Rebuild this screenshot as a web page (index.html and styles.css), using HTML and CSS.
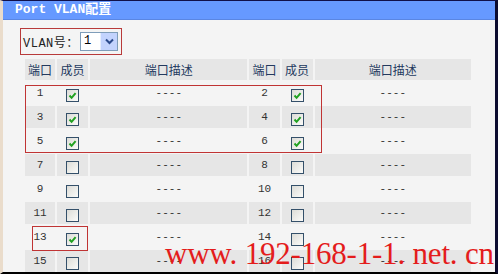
FILE: index.html
```html
<!DOCTYPE html>
<html lang="zh-CN">

<head>
  <meta charset="UTF-8">
  <title>Port VLAN配置</title>
  <link rel="stylesheet" href="styles.css">
</head>

<body>
  <div class="panel">
    <div class="title">Port VLAN配置</div>

    <div class="content">
      <div class="vlan-pick">
        <span class="vlan-label">VLAN号：</span>
        <span class="select">
          <span class="select-val">1</span>
          <span class="select-btn">
            <svg width="9" height="7" viewBox="0 0 9 7"><path d="M1 1.5 L4.5 5 L8 1.5" fill="none" stroke="#2b4a8c" stroke-width="2"/></svg>
          </span>
        </span>
      </div>

      <table class="ports">
        <colgroup>
          <col class="c-port"><col class="c-member"><col class="c-desc-l">
          <col class="c-port"><col class="c-member"><col class="c-desc-r">
        </colgroup>
        <tr class="head">
          <td>端口</td><td>成员</td><td>端口描述</td>
          <td>端口</td><td>成员</td><td>端口描述</td>
        </tr>
        <tr>
          <td>1</td><td><span class="box on"></span></td><td>----</td>
          <td>2</td><td><span class="box on"></span></td><td>----</td>
        </tr>
        <tr class="alt">
          <td>3</td><td><span class="box on"></span></td><td>----</td>
          <td>4</td><td><span class="box on"></span></td><td>----</td>
        </tr>
        <tr>
          <td>5</td><td><span class="box on"></span></td><td>----</td>
          <td>6</td><td><span class="box on"></span></td><td>----</td>
        </tr>
        <tr class="alt">
          <td>7</td><td><span class="box"></span></td><td>----</td>
          <td>8</td><td><span class="box"></span></td><td>----</td>
        </tr>
        <tr>
          <td>9</td><td><span class="box"></span></td><td>----</td>
          <td>10</td><td><span class="box"></span></td><td>----</td>
        </tr>
        <tr class="alt">
          <td>11</td><td><span class="box"></span></td><td>----</td>
          <td>12</td><td><span class="box"></span></td><td>----</td>
        </tr>
        <tr>
          <td>13</td><td><span class="box on"></span></td><td>----</td>
          <td>14</td><td><span class="box"></span></td><td>----</td>
        </tr>
        <tr class="alt">
          <td>15</td><td><span class="box"></span></td><td>----</td>
          <td>16</td><td><span class="box"></span></td><td>----</td>
        </tr>
      </table>
    </div>

    <!-- red annotation frames -->
    <div class="mark mark-rows"></div>
    <div class="mark mark-13"></div>

    <div class="watermark">www. 192-168-1-1. net. cn</div>
  </div>
</body>

</html>
```

FILE: styles.css
```css
html,
body {
  margin: 0;
  padding: 0;
  overflow: hidden;
}

body {
  font-family: "Liberation Mono", "Noto Sans CJK SC", monospace;
  background: #f4f4f4;
}

.panel {
  position: relative;
  width: 498px;
  height: 274px;
  box-sizing: border-box;
  border-top: 1px solid #10104a;
  border-right: 3px solid #0c0c30;
  border-bottom: 2px solid #000;
  border-left: 3px solid #eadccb;
  background: #f4f4f4;
  overflow: hidden;
}

.title {
  height: 18px;
  line-height: 18px;
  padding-left: 12px;
  background: #6699ff;
  border-bottom: 1px solid #5a86e2;
  color: #fff;
  font-size: 13px;
  font-weight: bold;
}

.vlan-pick {
  display: flex;
  align-items: center;
  width: 102px;
  height: 27px;
  box-sizing: border-box;
  margin: 8px 0 0 17px;
  padding-left: 2px;
  border: 1px solid #b83a3a;
}

.vlan-label {
  flex-shrink: 0;
  white-space: nowrap;
  font-size: 12px;
  letter-spacing: 0.5px;
  color: #222;
  width: 57px;
}

.select {
  display: flex;
  flex-shrink: 0;
  width: 38px;
  height: 19px;
  box-sizing: border-box;
  border: 1px solid #7f9db9;
  background: #fff;
}

.select-val {
  flex: 1;
  font-size: 12px;
  line-height: 17px;
  padding-left: 3px;
  color: #000;
}

.select-btn {
  display: flex;
  align-items: center;
  justify-content: center;
  width: 16px;
  background: #c3d3fd;
  border-left: 1px solid #e6eeff;
}

.ports {
  margin: 2px 0 0 20px;
  border-spacing: 2px;
  table-layout: fixed;
  width: 450px;
}

.c-port { width: 30px; }
.c-member { width: 31px; }
.c-desc-l { width: 157px; }
.c-desc-r { width: 156px; }

.ports td {
  height: 22px;
  padding: 0;
  text-align: center;
  font-size: 11px;
  color: #333;
}

.ports .head td {
  height: 21px;
  background: #e6e6e6;
  font-size: 12px;
  color: #23395e;
}

.ports .alt td {
  background: #e6e6e6;
}

.box {
  display: inline-block;
  width: 13px;
  height: 13px;
  box-sizing: border-box;
  margin-top: 5px;
  vertical-align: top;
  border: 1px solid #34506a;
  background: linear-gradient(135deg, #dcdcd7, #fbfbf9);
}

.box.on {
  background: url("data:image/svg+xml;utf8,<svg xmlns='http://www.w3.org/2000/svg' width='11' height='11'><path d='M2.5 5.5 L4.6 7.8 L8.6 3.2' fill='none' stroke='%2321a121' stroke-width='2'/></svg>") no-repeat center, linear-gradient(135deg, #dcdcd7, #fbfbf9);
}

.mark {
  position: absolute;
  border: 1px solid #c03434;
}

.mark-rows {
  left: 22px;
  top: 84px;
  width: 295px;
  height: 66px;
}

.mark-13 {
  left: 29px;
  top: 225px;
  width: 54px;
  height: 23px;
}

.watermark {
  position: absolute;
  left: 162px;
  top: 237px;
  font-family: "Liberation Serif", serif;
  font-size: 31px;
  line-height: 31px;
  letter-spacing: -0.2px;
  color: #e41c1c;
  white-space: nowrap;
}
```
